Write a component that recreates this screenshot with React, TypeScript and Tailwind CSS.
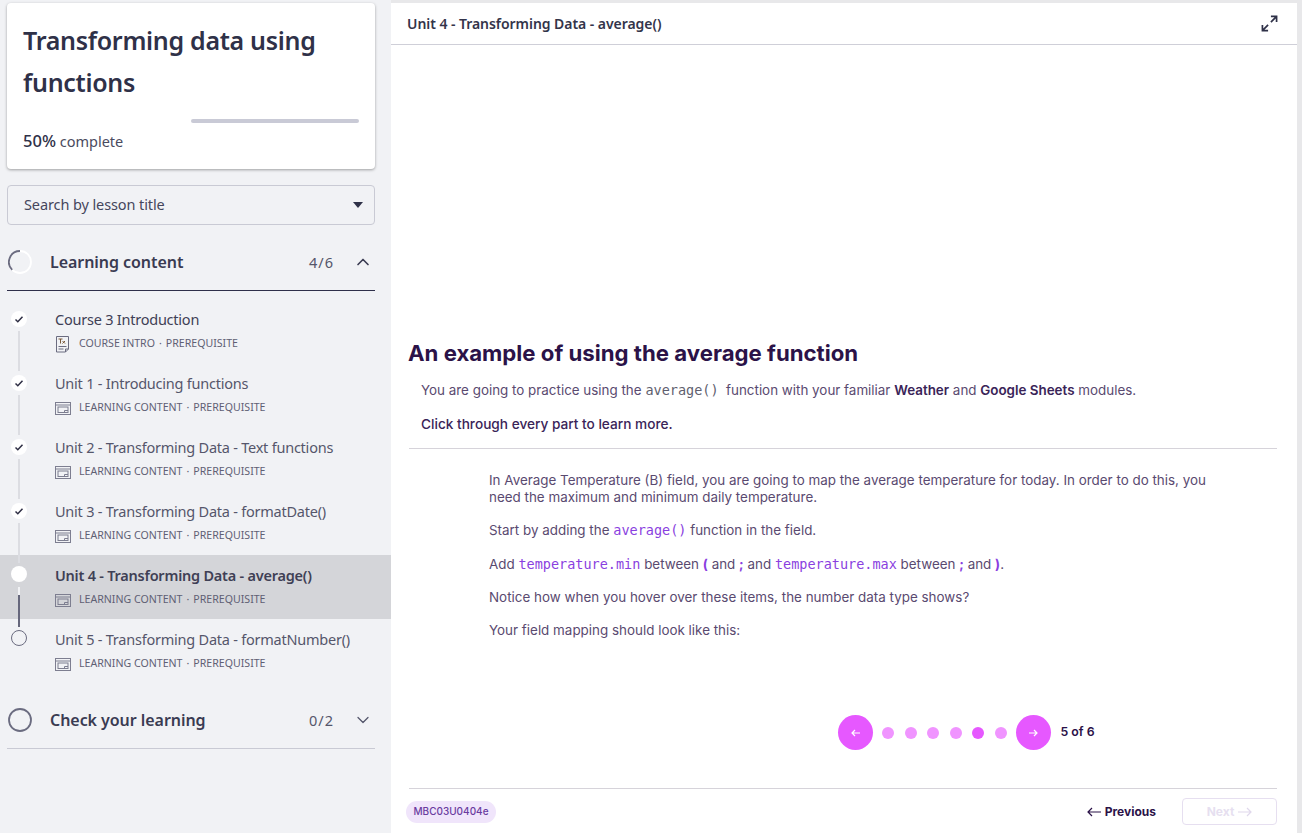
import React from 'react';
import { ChevronDown, ChevronUp } from 'lucide-react';

const lessons = [
  { title: 'Course 3 Introduction', kind: 'COURSE INTRO', state: 'done', dark: true },
  { title: 'Unit 1 - Introducing functions', kind: 'LEARNING CONTENT', state: 'done' },
  { title: 'Unit 2 - Transforming Data - Text functions', kind: 'LEARNING CONTENT', state: 'done' },
  { title: 'Unit 3 - Transforming Data - formatDate()', kind: 'LEARNING CONTENT', state: 'done' },
  { title: 'Unit 4 - Transforming Data - average()', kind: 'LEARNING CONTENT', state: 'active' },
  { title: 'Unit 5 - Transforming Data - formatNumber()', kind: 'LEARNING CONTENT', state: 'todo' },
];

const DocIcon = () => (
  <svg width="16" height="17" viewBox="0 0 16 17" fill="none" stroke="#6b6c80" strokeWidth="1">
    <path d="M1.500 0.500h12v12.500l-3 3h-9z" />
    <path d="M10.500 16v-3h3M3.500 10.500h8M3.500 13h5" />
    <path d="M3.500 3h4M5.500 3v4.500M7.500 5l2.500 2.500M10 5l-2.500 2.500" stroke="#7a5a3a" />
  </svg>
);

const WindowIcon = () => (
  <svg width="16" height="13" viewBox="0 0 16 13" fill="none" stroke="#7d7e90" strokeWidth="1">
    <rect x="0.500" y="0.500" width="15" height="12" />
    <path d="M0.500 3h15" />
    <rect x="3" y="5" width="10" height="5.500" />
    <path d="M9.500 10.500v-2h3.500" />
  </svg>
);

const Check = () => (
  <svg width="10" height="10" viewBox="0 0 10 10" fill="none" stroke="#2e2e44" strokeWidth="1.500">
    <path d="M1.500 5.500l2.300 2.200 4.700-5" />
  </svg>
);

const Lesson = ({ lesson, last }: { lesson: (typeof lessons)[number]; last: boolean }) => {
  const active = lesson.state === 'active';
  return (
    <div className={`flex h-16 pl-[11px] ${active ? 'bg-[#d4d5d9]' : ''}`}>
      <div className={`flex w-4 flex-col items-center ${lesson.state === 'done' ? 'pt-3' : 'pt-[11px]'}`}>
        {lesson.state === 'todo' ? (
          <div className="h-4 w-4 shrink-0 rounded-full border border-[#6b6c80]" />
        ) : (
          <div className="flex h-4 w-4 shrink-0 items-center justify-center rounded-full bg-white">
            {lesson.state === 'done' && <Check />}
          </div>
        )}
        {!last && (
          <div className={`h-10 w-[2px] shrink-0 ${active ? 'mt-[5px] bg-[#f1f2f5]' : 'mt-1 bg-[#dcdde2]'}`}>
            {active && <div className="mt-2 h-8 w-[2px] bg-[#66677c]" />}
          </div>
        )}
      </div>
      <div className="ml-7 pt-[10px]">
        <div
          className={`text-[14.500px] leading-5 tracking-[-0.23px] whitespace-nowrap ${
            active ? 'font-semibold text-[#3f4055]' : lesson.dark ? 'text-[#3f4055]' : 'text-[#55566b]'
          }`}
        >
          {lesson.title}
        </div>
        <div className="mt-[7px] flex h-4 items-center text-[10.600px] text-[#5f6074]">
          <span className="w-6 shrink-0">{lesson.dark ? <DocIcon /> : <WindowIcon />}</span>
          <span>{lesson.kind}</span>
          <span className="mx-[4px]">·</span>
          <span>PREREQUISITE</span>
        </div>
      </div>
    </div>
  );
};

const Section = ({ title, count, open }: { title: string; count: string; open: boolean }) => (
  <div
    className={`mr-[16px] ml-[7px] flex h-[66px] items-start border-b pt-[22px] ${
      open ? 'border-[#2f2f4a]' : 'border-[#c9cad4]'
    }`}
  >
    <div className="ml-[1px] flex h-[30px] w-[24px] items-center">
      {open ? (
        <svg width="24" height="24" viewBox="0 0 24 24" fill="none" strokeWidth="1.800">
          <circle cx="12" cy="12" r="11" stroke="#ffffff" />
          <path d="M12 1A11 11 0 0 0 4.200 19.800" stroke="#6b6c80" />
        </svg>
      ) : (
        <svg width="24" height="24" viewBox="0 0 24 24" fill="none" strokeWidth="1.800">
          <circle cx="12" cy="12" r="11" stroke="#6b6c80" />
        </svg>
      )}
    </div>
    <div className="ml-[18px] flex-1 text-[16px] leading-[30px] font-semibold tracking-[-0.05px] text-[#3a3b52]">
      {title}
    </div>
    <div className="mr-[19px] text-[14.500px] leading-[30px] tracking-[1px] text-[#55566b]">{count}</div>
    <div className="mr-[2px] flex h-[30px] items-center">
      {open ? (
        <ChevronUp size={20} strokeWidth={2} color="#3a3b52" />
      ) : (
        <ChevronDown size={20} strokeWidth={1.500} color="#55566b" />
      )}
    </div>
  </div>
);

const Code = ({ children }: { children: React.ReactNode }) => (
  <code className="font-['DejaVu_Sans_Mono',monospace] text-[13.500px] leading-none text-[#8a3fe0]">{children}</code>
);

export default function App() {
  return (
    <div className="flex h-[833px] w-[1302px] overflow-hidden bg-[#e8e8ea] font-['Inter',sans-serif]">
      {/* Sidebar */}
      <aside className="w-[391px] shrink-0 bg-[#f1f2f5] font-['Noto_Sans',sans-serif]">
        <div className="mt-[3px] mr-[16px] ml-[7px] h-[166px] rounded bg-white px-4 pt-4 shadow-[0_1px_3px_rgba(0,0,0,0.35)]">
          <h1 className="text-[25px] leading-[42px] font-semibold tracking-[-0.3px] text-[#2f3148]">
            Transforming data using functions
          </h1>
          <div className="mt-[16px] flex justify-end">
            <div className="h-1 w-[168px] rounded-sm bg-[#c9cad6]" />
          </div>
          <div className="mt-[8px] text-[14.500px] leading-5 text-[#4a4b60]">
            <span className="text-[16.500px] font-medium text-[#2f3148]">50%</span> complete
          </div>
        </div>

        <div className="mt-4 mr-[16px] ml-[7px] flex h-10 items-center justify-between rounded border border-[#c9cad4] pr-[11px] pb-[1px] pl-4 text-[14.500px] tracking-[-0.1px] text-[#45465c]">
          <span>Search by lesson title</span>
          <span className="mt-[1px] h-0 w-0 border-x-[5px] border-t-[6px] border-x-transparent border-t-[#2f3148]" />
        </div>

        <Section title="Learning content" count="4/6" open />
        <div className="mt-2">
          {lessons.map((lesson, i) => (
            <Lesson key={lesson.title} lesson={lesson} last={i === lessons.length - 1} />
          ))}
        </div>
        <Section title="Check your learning" count="0/2" open={false} />
      </aside>

      {/* Lesson panel */}
      <main className="mt-[3px] flex h-[830px] w-[906px] shrink-0 flex-col bg-white">
        <header className="flex h-[42px] shrink-0 items-center justify-between border-b border-[#cfcfd8] pr-[19px] pl-4 font-['Noto_Sans',sans-serif]">
          <span className="text-[14px] font-semibold tracking-[-0.05px] text-[#33344a]">
            Unit 4 - Transforming Data - average()
          </span>
          <svg width="17" height="17" viewBox="0 0 18 18" fill="none" stroke="#2f3148" strokeWidth="1.800">
            <path d="M10.500 1.500h6v6M16.500 1.500l-6 6" />
            <path d="M7.500 16.500h-6v-6M1.500 16.500l6-6" />
          </svg>
        </header>

        <div className="flex flex-1 flex-col pr-[20px] pl-[18px]">
          <h2 className="mt-[294px] -ml-[1px] text-[22.200px] leading-7 font-bold text-[#2b1248]">
            An example of using the average function
          </h2>
          <p className="mt-[15px] ml-[12px] text-[13.400px] leading-[17px] text-[#5a4a70]">
            You are going to practice using the{' '}
            <code className="font-['DejaVu_Sans_Mono',monospace] text-[13.500px] leading-none text-[#5f5f6f]">
              average()
            </code>
            &nbsp; function with your familiar <b className="font-semibold text-[#3a2458]">Weather</b> and{' '}
            <b className="font-semibold text-[#3a2458]">Google Sheets</b> modules.
          </p>
          <p className="mt-[17px] ml-[12px] text-[13.650px] leading-[17px] font-medium text-[#3a2458]">
            Click through every part to learn more.
          </p>
          <div className="mt-[15px] h-px bg-[#d6d3da]" />

          <div className="mt-[23px] ml-[80px] w-[730px] text-[13.420px] leading-[17px] text-[#5a4a70]">
            <p>
              In Average Temperature (B) field, you are going to map the average temperature for today. In order to do
              this, you need the maximum and minimum daily temperature.
            </p>
            <p className="mt-4">
              Start by adding the <Code>average()</Code> function in the field.
            </p>
            <p className="mt-[17px]">
              Add <Code>temperature.min</Code> between <b className="text-[#8a3fe0]">(</b> and{' '}
              <b className="text-[#8a3fe0]">;</b> and <Code>temperature.max</Code> between{' '}
              <b className="text-[#8a3fe0]">;</b> and <b className="text-[#8a3fe0]">)</b>.
            </p>
            <p className="mt-4">Notice how when you hover over these items, the number data type shows?</p>
            <p className="mt-4">Your field mapping should look like this:</p>
          </div>

          <div className="mt-[76px] ml-[429px] flex items-center">
            <button className="flex h-[35px] w-[35px] items-center justify-center rounded-full bg-[#e658ff]">
              <svg width="12" height="12" viewBox="0 0 12 12" fill="none" stroke="#ffffff" strokeWidth="1.200">
                <path d="M10 6H2M5 3L2 6l3 3" />
              </svg>
            </button>
            <div className="mx-[9px] flex gap-[10.500px]">
              {[0, 1, 2, 3, 4, 5].map((i) => (
                <span key={i} className={`h-3 w-3 rounded-full ${i === 4 ? 'bg-[#e658ff]' : 'bg-[#f094ff]'}`} />
              ))}
            </div>
            <button className="flex h-[35px] w-[35px] items-center justify-center rounded-full bg-[#e658ff]">
              <svg width="12" height="12" viewBox="0 0 12 12" fill="none" stroke="#ffffff" strokeWidth="1.200">
                <path d="M2 6h8M7 3l3 3-3 3" />
              </svg>
            </button>
            <span className="ml-[10px] text-[12.300px] font-semibold text-[#2b1248]">5 of 6</span>
          </div>

          <div className="mt-[38px] h-px bg-[#d6d3da]" />
          <div className="-ml-[3px] flex items-center justify-between pt-[9px]">
            <span className="flex h-[22px] w-[90px] items-center justify-center rounded-full bg-[#f0e5fb] text-[10px] font-medium text-[#6a3ca0]">
              MBC03U0404e
            </span>
            <div className="flex items-center">
              <span className="flex items-center gap-1 text-[12px] font-bold text-[#2b1248]">
                <svg width="14" height="10" viewBox="0 0 14 10" fill="none" stroke="#2b1248" strokeWidth="1.200">
                  <path d="M14 5H1M5 1L1 5l4 4" />
                </svg>
                Previous
              </span>
              <span className="ml-[26px] flex h-[27px] w-[95px] items-center justify-center gap-1 rounded border border-[#e6dff0] text-[12px] font-bold text-[#e6dff0]">
                Next
                <svg width="14" height="10" viewBox="0 0 14 10" fill="none" stroke="#e0d8ec" strokeWidth="1.200">
                  <path d="M0 5h13M9 1l4 4-4 4" />
                </svg>
              </span>
            </div>
          </div>
        </div>
      </main>
    </div>
  );
}
